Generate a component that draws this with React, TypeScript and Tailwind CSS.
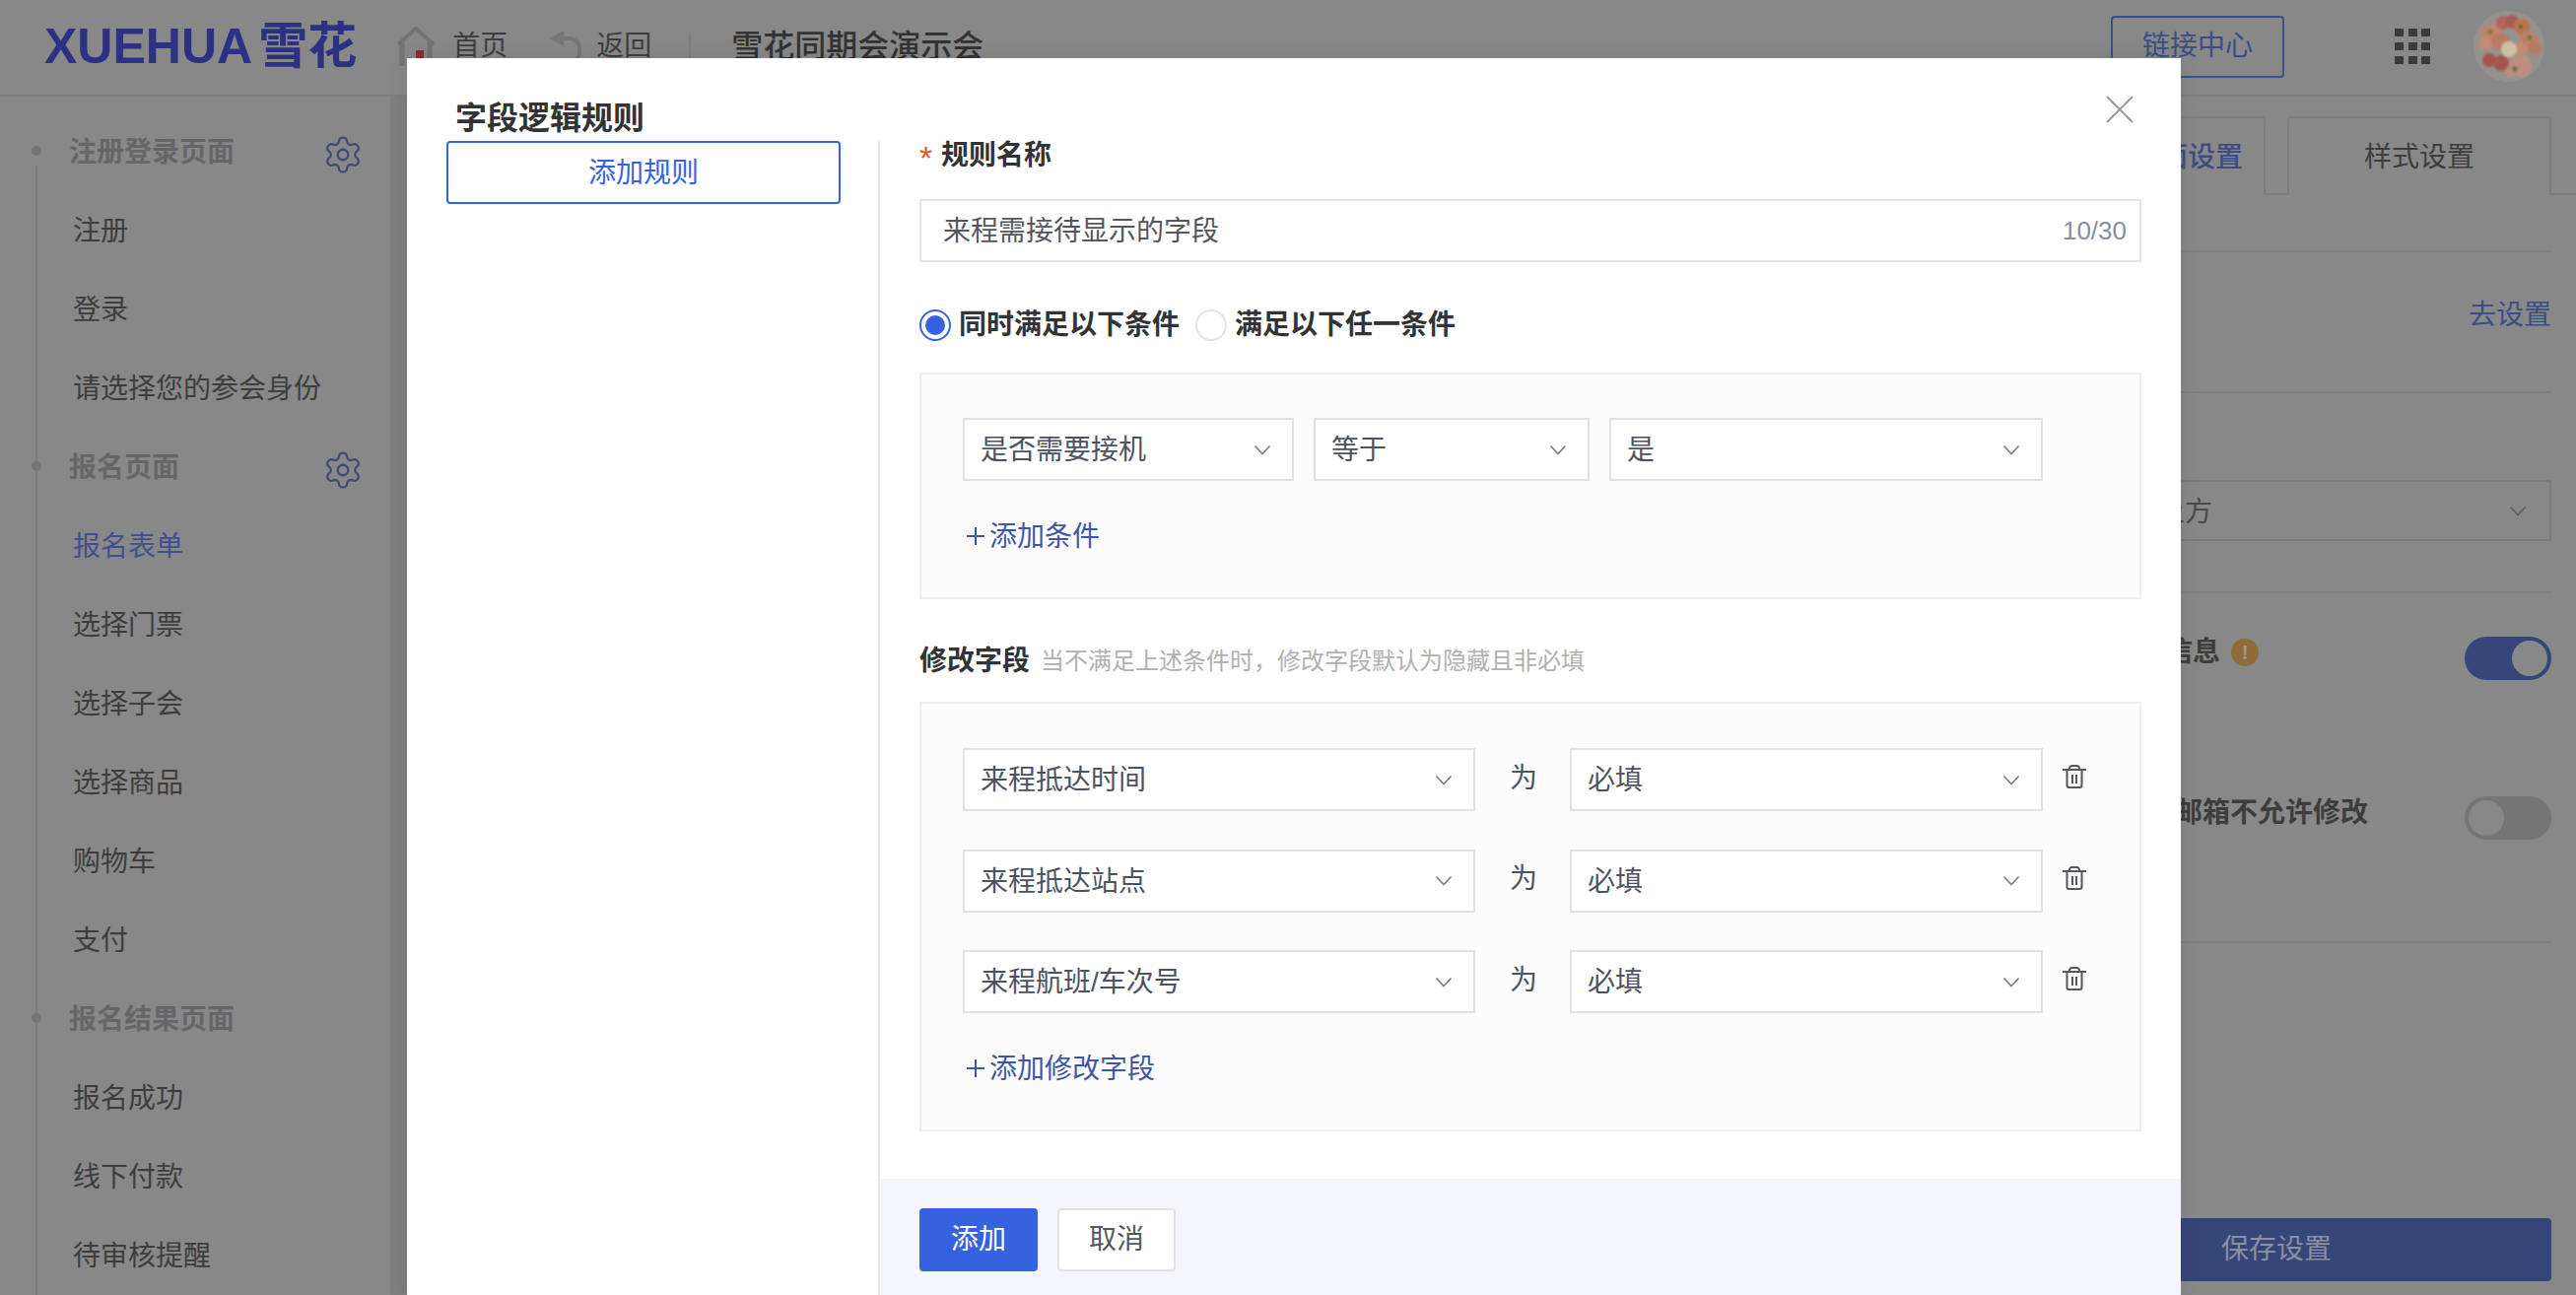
import React from 'react';
import { Settings } from 'lucide-react';

const menu = [
  { title: '注册登录页面', gear: true, items: ['注册', '登录', '请选择您的参会身份'] },
  { title: '报名页面', gear: true, items: ['报名表单', '选择门票', '选择子会', '选择商品', '购物车', '支付'] },
  { title: '报名结果页面', gear: false, items: ['报名成功', '线下付款', '待审核提醒'] },
];

const fieldRows = ['来程抵达时间', '来程抵达站点', '来程航班/车次号'];

const petals = [
  { x: 18, y: 24, r: 11, c: '#c2836c' },
  { x: 27, y: 31, r: 9, c: '#b97a63' },
  { x: 12, y: 33, r: 7, c: '#bf8a76' },
  { x: 30, y: 12, r: 7, c: '#b0655a' },
  { x: 39, y: 11, r: 7, c: '#a95c54' },
  { x: 49, y: 16, r: 8, c: '#bd7350' },
  { x: 56, y: 30, r: 10, c: '#bd7f69' },
  { x: 62, y: 38, r: 7, c: '#b87a66' },
  { x: 48, y: 38, r: 7, c: '#c08a76' },
  { x: 16, y: 50, r: 7, c: '#a9524b' },
  { x: 28, y: 53, r: 8, c: '#a5554e' },
  { x: 48, y: 56, r: 11, c: '#bd8d80' },
  { x: 38, y: 62, r: 6, c: '#b98c7f' },
  { x: 36, y: 39, r: 8, c: '#cbc2a3' },
];

function Chevron({ className }: { className?: string }) {
  return (
    <svg viewBox="0 0 18 11" className={className} fill="none" stroke="currentColor" strokeWidth="1.8">
      <path d="M1.5 1.5 9 9.5l7.5-8" />
    </svg>
  );
}

function Plus() {
  return (
    <svg viewBox="0 0 18 18" className="h-[18px] w-[18px]" fill="none" stroke="currentColor" strokeWidth="2">
      <path d="M9 0v18M0 9h18" />
    </svg>
  );
}

function Trash() {
  return (
    <svg viewBox="0 0 24 24" className="h-6 w-6 text-[#55575c]" fill="none" stroke="currentColor" strokeWidth="2">
      <path d="M0 5h24" />
      <path d="M7 5V3.5A2.5 2.5 0 0 1 9.5 1h5A2.5 2.5 0 0 1 17 3.500V5" />
      <path d="M4.500 5v16a2 2 0 0 0 2 2h11a2 2 0 0 0 2-2V5" />
      <path d="M10 10v9M14 10v9" />
    </svg>
  );
}

function Select({ label, width }: { label: string; width: string }) {
  return (
    <div className={`flex h-16 items-center justify-between border-2 border-[#e0e1e7] bg-white pl-[16px] pr-[21px] text-[28px] text-[#4d5260] ${width}`}>
      <span className="pt-[2px]">{label}</span>
      <Chevron className="h-[11px] w-[18px] text-[#7b8190]" />
    </div>
  );
}

function Toggle({ on }: { on: boolean }) {
  return (
    <div className={`flex h-11 w-[88px] items-center rounded-full px-1 ${on ? 'justify-end bg-[#34467a]' : 'justify-start bg-[#757575]'}`}>
      <div className="h-9 w-9 rounded-full bg-[#888888]" />
    </div>
  );
}

function Avatar() {
  return (
    <svg viewBox="0 0 72 72" className="h-[72px] w-[72px] rounded-full">
      <defs>
        <filter id="soft">
          <feGaussianBlur stdDeviation="1" />
        </filter>
      </defs>
      <rect width="72" height="72" fill="#94928d" />
      <g filter="url(#soft)">
        {petals.map((p) => (
          <circle key={`${p.x}-${p.y}`} cx={p.x} cy={p.y} r={p.r} fill={p.c} />
        ))}
        <circle cx="17" cy="21" r="3" fill="#76813a" />
        <circle cx="57" cy="27" r="2.500" fill="#5f7a3a" />
        <circle cx="48" cy="16" r="2" fill="#55613a" />
        <circle cx="42" cy="59" r="2.500" fill="#5a6a4a" />
      </g>
    </svg>
  );
}

function PageHeader() {
  return (
    <header className="flex h-[98px] shrink-0 items-center border-b-2 border-[#7d7d7d] pb-[2px] pl-[45px] pr-[32px] text-[28px] text-[#3e3e40]">
      <span className="text-[50px] font-bold leading-none text-[#2d3184]">XUEHUA</span>
      <span className="ml-[6px] text-[50px] font-bold leading-none text-[#2d3184]">雪花</span>
      <svg viewBox="0 0 40 40" className="ml-[40px] h-10 w-10" fill="none">
        <path d="M2 18 20 2l18 16" stroke="#737373" strokeWidth="4" />
        <path d="M6 16v24M34 16v24" stroke="#737373" strokeWidth="5" />
        <rect x="20" y="24" width="8" height="16" fill="#8e2f2f" />
      </svg>
      <span className="ml-[17px]">首页</span>
      <svg viewBox="0 0 32 32" className="ml-[43px] h-8 w-8" fill="none">
        <path d="M0 8 14 0v16z" fill="#777777" />
        <path d="M12 8h8a10 10 0 0 1 10 10v4a10 10 0 0 1-10 10h-8" stroke="#777777" strokeWidth="4" />
      </svg>
      <span className="ml-[15px]">返回</span>
      <div className="ml-[38px] h-7 w-[2px] bg-[#7d7d7d]" />
      <span className="ml-[41px] text-[32px] font-medium text-[#333335]">雪花同期会演示会</span>
      <div className="ml-auto flex h-[63px] w-[176px] items-center justify-center rounded-[4px] border-2 border-[#3a4f8c] text-[#3b4d86]">链接中心</div>
      <svg viewBox="0 0 36 36" className="ml-[112px] h-9 w-9" fill="#3a3a3a">
        {[0, 14, 27].map((x) => [0, 14, 28].map((y) => <rect key={`${x}-${y}`} x={x} y={y} width="9" height="8" />))}
      </svg>
      <div className="ml-[44px]">
        <Avatar />
      </div>
    </header>
  );
}

function Sidebar() {
  return (
    <aside className="w-[396px] shrink-0 pt-[17px] text-[28px] text-[#3d3d3d]">
      {menu.map((group, gi) => (
        <div key={group.title}>
          <div className={`relative ml-[36px] flex h-20 items-center justify-between border-l-2 pl-[32px] pr-[27px] font-bold text-[#666668] ${gi === 0 ? 'border-transparent' : 'border-[#7b7b7b]'}`}>
            {gi === 0 && <div className="absolute -left-[2px] bottom-0 top-[53px] w-[2px] bg-[#7b7b7b]" />}
            <div className="absolute -left-[6px] top-[33px] h-[10px] w-[10px] rounded-full bg-[#757575]" />
            <span>{group.title}</span>
            {group.gear && <Settings className="mt-[4px] h-[42px] w-[42px] text-[#3f4a70]" strokeWidth={1.3} />}
          </div>
          {group.items.map((item) => (
            <div key={item} className={`ml-[36px] flex h-20 items-center border-l-2 border-[#7b7b7b] pl-[36px] ${item === '报名表单' ? 'text-[#3f4f8f]' : ''}`}>
              {item}
            </div>
          ))}
        </div>
      ))}
    </aside>
  );
}

function SettingsPanel() {
  return (
    <section className="flex w-[549px] shrink-0 flex-col pl-[76px] pr-[25px] text-[28px] text-[#3d3d3d]">
      <div className="-mr-[25px] mt-[20px] flex h-[80px] shrink-0 items-end">
        <div className="flex h-full w-[158px] items-center justify-center rounded-t-[4px] border-2 border-b-0 border-[#7d7d7d] pt-[2px] font-medium text-[#3b4d86]">页面设置</div>
        <div className="h-[2px] w-[22px] bg-[#7d7d7d]" />
        <div className="flex h-full flex-1 items-center justify-center rounded-t-[4px] border-2 border-b-0 border-[#7d7d7d] pt-[2px]">样式设置</div>
        <div className="h-[2px] w-[25px] bg-[#7d7d7d]" />
      </div>
      <div className="h-[58px] shrink-0 border-b-2 border-[#7f7f7f]" />
      <div className="flex h-[143px] shrink-0 items-start justify-end border-b-2 border-[#7f7f7f] pt-[43px] text-[#3b4d86]">去设置</div>
      <div className="h-[203px] shrink-0 border-b-2 border-[#7f7f7f] pt-[88px]">
        <div className="-ml-[76px] flex h-[62px] items-center justify-between border-2 border-[#7a7a7a] pl-[122px] pr-[23px] text-[#4a4a4c]">
          <span className="pt-[3px]">上方</span>
          <Chevron className="h-[11px] w-[18px] text-[#5f5f62]" />
        </div>
      </div>
      <div className="h-[355px] shrink-0 border-b-2 border-[#7f7f7f]">
        <div className="flex items-start justify-between pt-[44px]">
          <div className="-mt-[5px] flex items-center gap-[11px]">
            <span className="-ml-[76px] pl-[76px] font-bold">报名信息</span>
            <span className="flex h-7 w-7 items-center justify-center rounded-full bg-[#8f6a3a] text-[20px] font-bold leading-none text-[#a89a86]">!</span>
          </div>
          <Toggle on />
        </div>
        <div className="flex items-start justify-between pt-[118px]">
          <span className="-mt-[4px] ml-[10px] font-bold">手机邮箱不允许修改</span>
          <Toggle on={false} />
        </div>
      </div>
      <div className="mt-auto pb-[14px]">
        <div className="flex h-16 items-center rounded-[4px] bg-[#34467a] pl-[113px] text-[#8c8f9c]">保存设置</div>
      </div>
    </section>
  );
}

function ConditionBox() {
  return (
    <div className="mt-8 h-[230px] border-2 border-[#eeeeee] bg-[#fcfcfd] pl-[42px] pt-[44px]">
      <div className="flex gap-5">
        <Select label="是否需要接机" width="w-[336px]" />
        <Select label="等于" width="w-[280px]" />
        <Select label="是" width="w-[440px]" />
      </div>
      <button className="mt-9 flex h-10 items-center gap-[5px] pl-[4px] text-[28px] text-[#4055a8]">
        <Plus />
        <span className="pt-[2px]">添加条件</span>
      </button>
    </div>
  );
}

function FieldBox() {
  return (
    <div className="mt-7 h-[436px] border-2 border-[#eeeeee] bg-[#fcfcfd] pl-[42px] pt-[45px]">
      <div className="flex flex-col gap-[38.5px]">
        {fieldRows.map((name) => (
          <div key={name} className="flex items-center">
            <Select label={name} width="w-[520px]" />
            <span className="mb-[3px] ml-[35px] text-[28px] text-[#4d5260]">为</span>
            <div className="ml-[33px]">
              <Select label="必填" width="w-[480px]" />
            </div>
            <div className="mb-[6px] ml-[20px]">
              <Trash />
            </div>
          </div>
        ))}
      </div>
      <button className="mt-9 flex h-10 items-center gap-[5px] pl-[4px] text-[28px] text-[#4055a8]">
        <Plus />
        <span className="pt-[2px]">添加修改字段</span>
      </button>
    </div>
  );
}

function RuleModal() {
  return (
    <div className="absolute bottom-0 left-[413px] top-[59px] flex w-[1800px] flex-col bg-white shadow-[0_0_20px_rgba(0,0,0,0.1)]">
      <h2 className="h-[84px] shrink-0 pl-[49px] pt-[41px] text-[32px] font-bold leading-10 text-[#333333]">字段逻辑规则</h2>
      <svg viewBox="0 0 28 28" className="absolute right-[48px] top-[38px] h-7 w-7 text-[#9a9a9a]" fill="none" stroke="currentColor" strokeWidth="2">
        <path d="M1 1l26 26M27 1 1 27" />
      </svg>
      <div className="flex min-h-0 flex-1">
        <div className="w-[480px] shrink-0 border-r-2 border-[#e8e8e8] pl-[40px]">
          <button className="h-16 w-[400px] rounded-[4px] border-2 border-[#3563e0] pt-[2px] text-[28px] text-[#3563e0]">添加规则</button>
        </div>
        <div className="flex min-w-0 flex-1 flex-col">
          <div className="flex-1 px-10">
            <div className="flex h-7 items-center pt-[2px] text-[28px] font-semibold leading-7 text-[#333333]">
              <span className="mt-[4px] w-[22px] text-[34px] font-normal text-[#e8572a]">*</span>
              <span>规则名称</span>
            </div>
            <div className="mt-[31px] flex h-16 items-center justify-between border-2 border-[#e5e5e8] pl-[22px] pr-[13px]">
              <span className="pt-[2px] text-[28px] text-[#55575c]">来程需接待显示的字段</span>
              <span className="text-[26px] text-[#8a8f9c]">10/30</span>
            </div>
            <div className="mt-12 flex h-8 items-center text-[28px] font-semibold text-[#333333]">
              <div className="flex h-8 w-8 items-center justify-center rounded-full border-2 border-[#3563e0]">
                <div className="h-5 w-5 rounded-full bg-[#3563e0]" />
              </div>
              <span className="ml-2">同时满足以下条件</span>
              <div className="ml-4 h-8 w-8 rounded-full border-2 border-[#e2e2e2]" />
              <span className="ml-2">满足以下任一条件</span>
            </div>
            <ConditionBox />
            <div className="mt-12 flex h-7 items-center pt-[2px]">
              <span className="text-[28px] font-bold text-[#333333]">修改字段</span>
              <span className="ml-[11px] text-[24px] text-[#b0b0b0]">当不满足上述条件时，修改字段默认为隐藏且非必填</span>
            </div>
            <FieldBox />
          </div>
          <div className="flex h-[118px] shrink-0 gap-5 bg-[#f3f5fa] px-10 pt-[30px] text-[28px]">
            <button className="h-16 w-[120px] rounded-[4px] bg-[#3563e0] text-white">添加</button>
            <button className="h-16 w-[120px] rounded-[4px] border-2 border-[#e2e2e4] bg-white text-[#55575c]">取消</button>
          </div>
        </div>
      </div>
    </div>
  );
}

export default function App() {
  return (
    <div className="relative flex h-[1314px] w-[2614px] flex-col overflow-hidden bg-[#888888] [font-family:'Liberation_Sans','Noto_Sans_CJK_SC',sans-serif]">
      <PageHeader />
      <div className="flex min-h-0 flex-1">
        <Sidebar />
        <main className="flex-1 bg-gradient-to-r from-[#7f7f7f] to-[#747676]" />
        <SettingsPanel />
      </div>
      <RuleModal />
    </div>
  );
}
